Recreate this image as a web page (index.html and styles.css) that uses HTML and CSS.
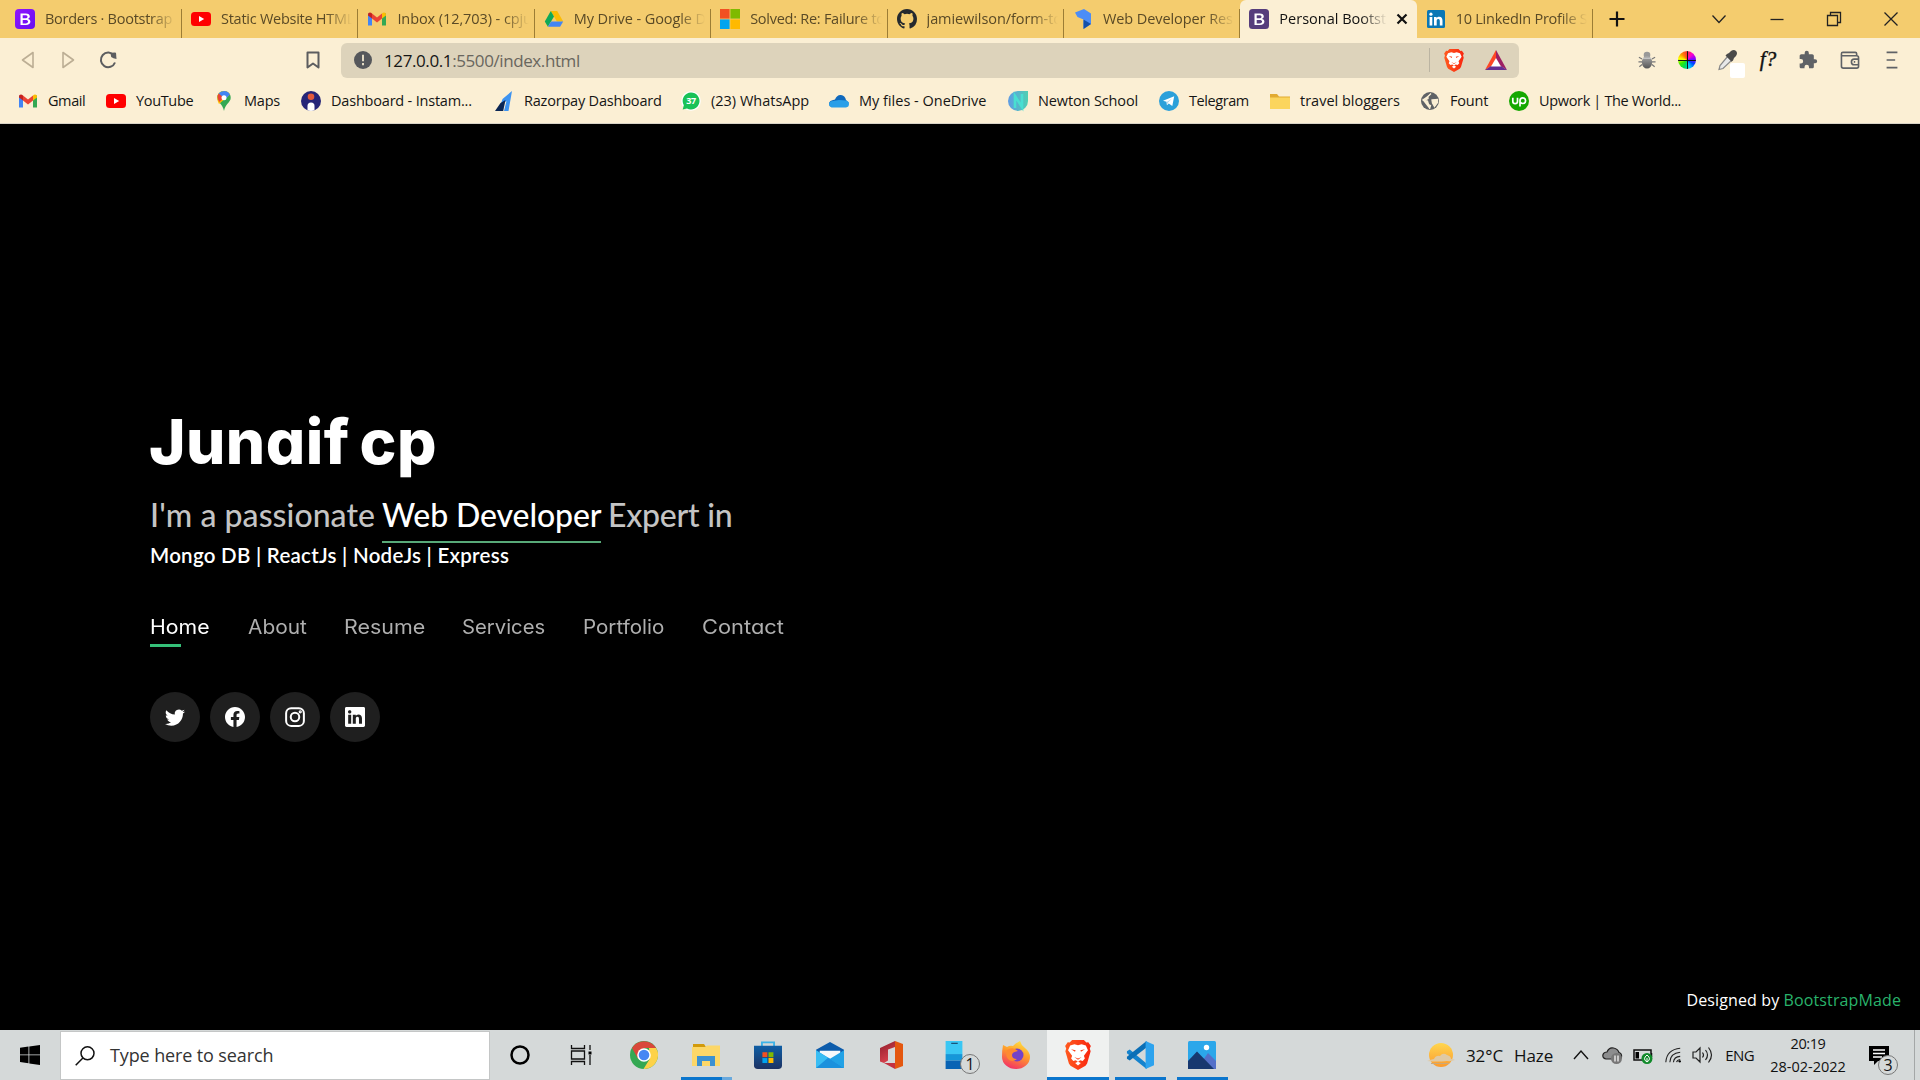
FILE: index.html
```html
<!DOCTYPE html>
<html lang="en">
<head>
<meta charset="utf-8">
<title>Personal Bootstrap Portfolio</title>
<link rel="stylesheet" href="styles.css">
</head>
<body>
<svg class="defs" aria-hidden="true">
  <defs>
    <linearGradient id="purple" x2="1" y2="1"><stop stop-color="#9013fe"/><stop offset="1" stop-color="#6610f2"/></linearGradient>
    <linearGradient id="ff" x1=".7" x2=".3" y2="1"><stop stop-color="#ffe144"/><stop offset=".45" stop-color="#ff9a2b"/><stop offset="1" stop-color="#f22f68"/></linearGradient>
    <linearGradient id="store" x2="0" y2="1"><stop stop-color="#0f5fa6"/><stop offset="1" stop-color="#1c3263"/></linearGradient>
    <linearGradient id="office" x2=".4" y2="1"><stop stop-color="#8f1d2b"/><stop offset="1" stop-color="#d8434e"/></linearGradient>
    <linearGradient id="brv" x2="1"><stop stop-color="#ff5a1f"/><stop offset="1" stop-color="#f9260f"/></linearGradient>
    <linearGradient id="sun" x2="0" y2="1"><stop stop-color="#ffd64f"/><stop offset="1" stop-color="#fb9a2e"/></linearGradient>
    <linearGradient id="nw" x2="1"><stop stop-color="#5f9be4"/><stop offset="1" stop-color="#4fd0b2"/></linearGradient>
    <linearGradient id="bug" x2="0" y2="1"><stop stop-color="#aaa"/><stop offset="1" stop-color="#555"/></linearGradient>
    <symbol id="i-yt" viewBox="0 0 20 20"><rect y="3" width="20" height="14" rx="3.5" fill="#f00"/><path d="M8 7l5.2 3L8 13z" fill="#fff"/></symbol>
    <symbol id="i-gmail" viewBox="0 0 20 20"><path d="M1 4v12.500h4V8z" fill="#4285f4"/><path d="M19 4v12.500h-4V8z" fill="#34a853"/><path d="M5 4.500l5 3.900 5-3.900v5L10 13.400 5 9.500z" fill="#ea4335"/><path d="M1 5.500C1 3.300 3.500 2.700 5 4.500v5L1 6.500z" fill="#c5221f"/><path d="M19 5.500c0-2.200-2.500-2.800-4-1v5l4-3z" fill="#fbbc04"/></symbol>
    <symbol id="i-in" viewBox="0 0 20 20"><rect x="1" y="1" width="18" height="18" rx="1.500" fill="#0a77b5"/><path d="M3.600 8h2.700v8.500H3.600zM8 8h2.600v1.200C11.200 8.300 12 7.800 13.300 7.800c2.500 0 3.200 1.700 3.200 4v4.700h-2.700v-4.200c0-1.200-.3-2.200-1.500-2.200s-1.600.9-1.600 2.100v4.300H8z" fill="#fff"/><circle cx="4.950" cy="5.200" r="1.600" fill="#fff"/></symbol>
    <symbol id="i-brave" viewBox="0 0 24 28"><path d="M6.500 0h11l2.300 2.300 1.800-.3L24 5.500l-1 2.500.8 2.500-3.300 11.500-1.500 2L12 28l-7-4-1.500-2L.2 10.500 1 8 0 5.500 2.400 2l1.800.3z" fill="url(#brv)"/><path d="M12 5l3.300-1 4 1.200 2 4.300-3.800 5.300.9 2.500-2 2.200-2.400-.6L12 20.500l-2-1.600-2.400.6-2-2.200.9-2.500L2.700 9.500l2-4.300L8.700 4z" fill="#fff"/><path d="M9.300 21.500l2.700-1.300 2.700 1.300-2.700 2.300z" fill="#fff"/><path d="M5.500 8.600l4.300.9-.6 1.500zM18.500 8.600l-4.300.9.600 1.500zM8.500 15.800l3.500 1.500 3.500-1.500-3.500 2.600z" fill="#fa4119"/></symbol>
    <symbol id="i-boot" viewBox="0 0 20 20"><path fill="#fff" fill-rule="evenodd" d="M5.500 4.500h5.300c2.600 0 4 1.100 4 3 0 1.200-.8 2.100-1.900 2.400 1.500.2 2.500 1.200 2.500 2.700 0 2.200-1.700 3.400-4.500 3.400H5.500zm2.200 1.700v3.100h2.300c1.600 0 2.500-.5 2.500-1.600 0-1-.7-1.500-2.100-1.500zm0 4.700v3.500h2.900c1.600 0 2.500-.6 2.500-1.800s-.9-1.700-2.700-1.700z"/></symbol>
  </defs>
</svg>

<header class="browser">
  <div class="tabstrip">
    <div class="tab first"><svg class="ico" viewBox="0 0 20 20"><rect width="20" height="20" rx="4" fill="url(#purple)"/><use href="#i-boot"/></svg><span class="title tight">Borders · Bootstrap</span></div>
    <div class="tab"><svg class="ico"><use href="#i-yt"/></svg><span class="title tight">Static Website HTML</span></div>
    <div class="tab"><svg class="ico"><use href="#i-gmail"/></svg><span class="title">Inbox (12,703) - cpju</span></div>
    <div class="tab"><svg class="ico" viewBox="0 0 20 20"><path d="M6.800 2h6.400l6 10.500h-6.300z" fill="#fbbc04"/><path d="M6.800 2L.8 12.500l3.100 5.300L10 7.500z" fill="#0fa958"/><path d="M3.900 17.800l3.200-5.300h12.100l-3.100 5.300z" fill="#4285f4"/></svg><span class="title">My Drive - Google D</span></div>
    <div class="tab"><svg class="ico" viewBox="0 0 20 20"><path d="M0 0h9.600v9.600H0z" fill="#f25022"/><path d="M10.400 0H20v9.600h-9.600z" fill="#7fba00"/><path d="M0 10.400h9.600V20H0z" fill="#00a4ef"/><path d="M10.400 10.400H20V20h-9.600z" fill="#ffb900"/></svg><span class="title tight">Solved: Re: Failure to</span></div>
    <div class="tab"><svg class="ico" viewBox="0 0 16 16"><path fill="#24292e" d="M8 0C3.580 0 0 3.580 0 8c0 3.540 2.290 6.530 5.470 7.590.4.070.55-.17.55-.38v-1.490c-2.010.37-2.530-.49-2.690-.94-.09-.23-.48-.94-.82-1.130-.28-.15-.68-.52-.01-.53.63-.01 1.080.58 1.230.82.72 1.210 1.870.87 2.330.66.070-.52.280-.87.510-1.070-1.780-.2-3.640-.89-3.640-3.950 0-.87.310-1.590.820-2.150-.08-.2-.36-1.020.08-2.120 0 0 .67-.21 2.200.82a7.400 7.400 0 0 1 4 0c1.530-1.040 2.200-.82 2.200-.82.44 1.100.16 1.920.08 2.120.51.56.82 1.270.82 2.150 0 3.070-1.870 3.750-3.650 3.950.29.25.54.73.54 1.480v2.200c0 .21.150.46.550.38A8 8 0 0 0 16 8c0-4.420-3.580-8-8-8z"/></svg><span class="title">jamiewilson/form-to</span></div>
    <div class="tab"><svg class="ico" viewBox="0 0 20 20"><path d="M2 3.500L11 0l7 4.500V15l-7.500 5v-9.500L4.500 8z" fill="#4c8df6"/><path d="M10.500 10.500L18 15l-7.500 5z" fill="#1450a8"/></svg><span class="title">Web Developer Resu</span></div>
    <div class="tab active"><svg class="ico" viewBox="0 0 20 20"><rect width="20" height="20" rx="3.500" fill="#563d7c"/><use href="#i-boot"/></svg><span class="title">Personal Bootstr</span><svg class="close" viewBox="0 0 12 12"><path d="M1.500 1.500l9 9m0-9l-9 9" stroke="#111" stroke-width="2.200"/></svg></div>
    <div class="tab"><svg class="ico"><use href="#i-in"/></svg><span class="title tight">10 LinkedIn Profile S</span></div>
    <svg class="newtab" viewBox="0 0 16 16"><path d="M8 .5v15M.5 8h15" stroke="#111" stroke-width="2.200"/></svg>
    <div class="winctl">
      <svg viewBox="0 0 16 16"><path d="M1.500 4.500L8 11.500l6.500-7" /></svg>
      <svg viewBox="0 0 16 16"><path d="M1.500 8.500h13"/></svg>
      <svg viewBox="0 0 16 16"><path d="M1.500 4.500h10v10h-10zM4.500 4.500v-3h10v10h-3"/></svg>
      <svg viewBox="0 0 16 16"><path d="M1.500 1.500l13 13m0-13l-13 13"/></svg>
    </div>
  </div>

  <div class="toolbar">
    <svg class="nav" viewBox="0 0 20 20"><path d="M15 2.500v15L4.500 10z" fill="none" stroke="#bcae94" stroke-width="1.600" stroke-linejoin="round"/></svg>
    <svg class="nav" viewBox="0 0 20 20"><path d="M5 2.500v15L15.500 10z" fill="none" stroke="#bcae94" stroke-width="1.600" stroke-linejoin="round"/></svg>
    <svg class="nav" viewBox="0 0 20 20"><path d="M17 12.500A7.300 7.300 0 1 1 16 5.500" fill="none" stroke="#5c5d5f" stroke-width="2"/><path d="M12.500 3.500q2.500-1.300 5.500-.8l.5 6.200q-3.500-.3-5.300-2z" fill="#5c5d5f"/></svg>
    <svg class="nav mark" viewBox="0 0 20 20"><path d="M4.500 2.500h11v15L10 13.500l-5.500 4z" fill="none" stroke="#5c5d5f" stroke-width="2" stroke-linejoin="round"/></svg>
    <div class="url">
      <svg class="info" viewBox="0 0 18 18"><circle cx="9" cy="9" r="9" fill="#55575b"/><path d="M9 3.800v6.400m0 1.800v2.200" stroke="#e3dac3" stroke-width="2"/></svg>
      <span class="addr"><b>127.0.0.1</b>:5500/index.html</span>
      <i class="sep"></i>
      <svg class="shield"><use href="#i-brave"/></svg>
      <svg class="bat" viewBox="0 0 22 20"><path d="M11 0L0 20l11-7z" fill="#ff4724"/><path d="M11 0l11 20-11-7z" fill="#9e1f63"/><path d="M0 20h22l-6-4H6z" fill="#662d91"/><path d="M11 8l5 8.500H6z" fill="#fff"/></svg>
    </div>
    <div class="ext">
      <svg viewBox="0 0 20 20"><path d="M4.500 9L1 7m3.500 5H.5m4 3L1.500 17.500M15.500 9L19 7m-3.500 5h4m-4 3l3 2.500" stroke="#777" stroke-width="1.300" fill="none"/><circle cx="10" cy="4.500" r="3.700" fill="#999"/><ellipse cx="10" cy="12.500" rx="5.700" ry="7" fill="url(#bug)"/><path d="M5 8h10" stroke="#ddd"/></svg>
      <div class="wheelbox"><i class="wheel"></i></div>
      <div class="picker"><svg viewBox="0 0 20 20"><path d="M10 6l4 4-9 8.500-4 1 1-4z" fill="#e8e8e8" stroke="#888" stroke-width="1.200"/><path d="M9 4l2-1 2-2q3-2 5 0t0 5l-2 2-1 2.500-1.500 1.200L7.500 5.500z" fill="#4a4a4a"/></svg><i></i></div>
      <div class="fn">f?</div>
      <svg class="puzzle" viewBox="0 0 24 24"><path fill="#5f6266" d="M20.500 11H19V7c0-1.100-.9-2-2-2h-4V3.500a2.500 2.500 0 0 0-5 0V5H4c-1.100 0-2 .9-2 2v3.800h1.500a2.700 2.700 0 0 1 0 5.400H2V20c0 1.100.9 2 2 2h3.800v-1.500a2.700 2.700 0 0 1 5.400 0V22H17c1.100 0 2-.9 2-2v-4h1.500a2.500 2.500 0 0 0 0-5z"/></svg>
      <svg class="wallet" viewBox="0 0 20 20"><path d="M17 5V3q0-1.500-1.500-1.500h-13Q1 1.500 1 3v13q0 2 2 2h14q2 0 2-2V7q0-2-2-2H1M19 8.500h-4.500a3 3 0 0 0 0 6H19M14 11.500h1.500" fill="none" stroke="#5f6266" stroke-width="1.700"/></svg>
      <svg viewBox="0 0 20 20"><path d="M4 1.500h12M4 10h9.500M4 18.500h12" stroke="#5f6266" stroke-width="1.800"/></svg>
    </div>
  </div>

  <nav class="bookmarks">
    <a class="w88 t4"><svg class="ico"><use href="#i-gmail"/></svg>Gmail</a>
    <a class="w108 t3"><svg class="ico"><use href="#i-yt"/></svg>YouTube</a>
    <a class="w87 t2"><svg class="ico" viewBox="0 0 20 20"><path d="M10 0C6 0 3.300 3 3.300 6.700 3.300 11.500 9 13 10 20c1-7 6.700-8.500 6.700-13.300C16.700 3 14 0 10 0z" fill="#34a853"/><path d="M10 0c3 0 5 1.500 6 3.600L5 13Q3.300 10 3.300 6.700 3.300 1 10 0z" fill="#fbbc04"/><path d="M10 0c3 0 5 1.500 6 3.600L10 9.500 4.700 2.600Q6.500 0 10 0z" fill="#4285f4"/><path d="M4.700 2.600l5 4.200L5.500 11Q2 6 4.700 2.600z" fill="#ea4335"/><circle cx="10" cy="6.700" r="2.500" fill="#fff"/></svg>Maps</a>
    <a class="w193 t2"><svg class="ico" viewBox="0 0 20 20"><circle cx="10" cy="10" r="10" fill="#262578"/><circle cx="10" cy="5.800" r="3.300" fill="#e35a3c"/><path d="M6.500 19v-4a3.500 3.500 0 0 1 7 0v4q-3.500 2-7 0z" fill="#fff"/></svg>Dashboard - Instam...</a>
    <a class="w187 t2"><svg class="ico" viewBox="0 0 20 20"><path d="M18 0l-3.500 20H10l2.500-10-6 4 2-6z" fill="#3d93f0"/><path d="M6.500 12l5-3-2.300 11H1z" fill="#0b2654"/></svg>Razorpay Dashboard</a>
    <a class="w148"><svg class="ico" viewBox="0 0 20 20"><circle cx="10" cy="10" r="9.800" fill="#fff"/><path d="M10 1.500a8.500 8.500 0 1 1-4 16l-4.300 1 1.100-4.200A8.500 8.500 0 0 1 10 1.500z" fill="#19c257"/><text x="10" y="13.300" text-anchor="middle" font-size="9" font-weight="700" fill="#fff">37</text></svg>(23) WhatsApp</a>
    <a class="w179"><svg class="ico" viewBox="0 0 20 20"><path d="M6 8.500Q8 3.500 12 4t5 5l3 3-8 4L3 16Q0 15.500 0 12.500T6 8.500z" fill="#0f69bd"/><path d="M2.500 16.500Q0 16 0 13.200T4 10l6-1 7 .5q3 .5 3 3.500t-3 3.500z" fill="#2a9fe8"/></svg>My files - OneDrive</a>
    <a class="w151 t1"><svg class="ico" viewBox="0 0 20 20"><path d="M10 0h10v10a10 10 0 1 1-10-10z" fill="url(#nw)"/><path d="M7 17V5l7 11V3" fill="none" stroke="#49dfd1" stroke-width="2.600"/></svg>Newton School</a>
    <a class="w111 t4"><svg class="ico" viewBox="0 0 20 20"><circle cx="10" cy="10" r="10" fill="#2ba0da"/><path d="M4 9.800L15.200 5.300 13.300 15l-3.500-2.600-1.900 1.900-.4-3.500z" fill="#fff"/><path d="M7.700 11l5.300-3.600-4.100 4.400-.8 2z" fill="#b4d6ea"/></svg>Telegram</a>
    <a class="w150"><svg class="ico" viewBox="0 0 20 20"><path d="M0 3h7l2 2.500h11V17H0z" fill="#e2ab31"/><path d="M0 6.500h20V18H0z" fill="#fbd55d"/></svg>travel bloggers</a>
    <a class="w89 t2"><svg class="ico" viewBox="0 0 20 20"><circle cx="10" cy="10" r="9" fill="#5f6266"/><path d="M11 2.500l-3 3v2L5 9l-2.500-.5M2.500 9l5 1 1 3.500 2 1-1 3.500M12 9l5.500-.5v3l-3 4-2-3.500z" fill="#faefd5" stroke="#faefd5" stroke-width="1.300"/></svg>Fount</a>
    <a class="t3"><svg class="ico" viewBox="0 0 20 20"><circle cx="10" cy="10" r="10" fill="#15a800"/><path d="M3.800 6.800v3.400a2.200 2.200 0 0 0 4.700 0V6.800M11 15.500V9.700a2.800 2.800 0 1 1 2.800 2.800q-1.600 0-2.800-1.300" fill="none" stroke="#fff" stroke-width="1.700"/></svg>Upwork | The World...</a>
  </nav>
</header>

<main class="page">
  <section class="hero">
    <h1>Junaif cp</h1>
    <h2><span class="lead">I'm a passionate</span> <span class="role">Web Developer</span> <span class="tail">Expert in</span></h2>
    <p class="skills">Mongo DB | ReactJs | NodeJs | Express</p>
    <nav class="menu">
      <a class="on"><span class="m1">Home</span></a><a><span class="m2">About</span></a><a><span class="m3">Resume</span></a><a><span class="m4">Services</span></a><a><span class="m5">Portfolio</span></a><a><span class="m6">Contact</span></a>
    </nav>
    <div class="social">
      <a><svg viewBox="0 0 16 16"><path d="M5.026 15c6.038 0 9.341-5.003 9.341-9.334 0-.14 0-.282-.006-.422A6.685 6.685 0 0 0 16 3.542a6.658 6.658 0 0 1-1.889.518 3.301 3.301 0 0 0 1.447-1.817 6.533 6.533 0 0 1-2.087.793A3.286 3.286 0 0 0 7.875 6.030a9.325 9.325 0 0 1-6.767-3.429 3.289 3.289 0 0 0 1.018 4.382A3.323 3.323 0 0 1 .64 6.575v.045a3.288 3.288 0 0 0 2.632 3.218 3.203 3.203 0 0 1-.865.115 3.230 3.230 0 0 1-.614-.057 3.283 3.283 0 0 0 3.067 2.277A6.588 6.588 0 0 1 .780 13.580a6.320 6.320 0 0 1-.780-.045A9.344 9.344 0 0 0 5.026 15z"/></svg></a>
      <a><svg viewBox="0 0 16 16"><path d="M16 8.049c0-4.446-3.582-8.050-8-8.050C3.580 0-.002 3.603-.002 8.050c0 4.017 2.926 7.347 6.750 7.951v-5.625h-2.030V8.050H6.750V6.275c0-2.017 1.195-3.131 3.022-3.131.876 0 1.791.157 1.791.157v1.980h-1.009c-.993 0-1.303.621-1.303 1.258v1.510h2.218l-.354 2.326H9.250V16c3.824-.604 6.750-3.934 6.750-7.951z"/></svg></a>
      <a><svg viewBox="0 0 16 16" class="line"><rect x=".9" y=".9" width="14.200" height="14.200" rx="4"/><circle cx="8" cy="8" r="3.400"/><circle cx="12.200" cy="3.800" r=".5"/></svg></a>
      <a><svg viewBox="0 0 16 16"><path d="M0 1.146C0 .513.526 0 1.175 0h13.650C15.474 0 16 .513 16 1.146v13.708c0 .633-.526 1.146-1.175 1.146H1.175C.526 16 0 15.487 0 14.854zm4.943 12.248V6.169H2.542v7.225zm-1.200-8.212c.837 0 1.358-.554 1.358-1.248-.015-.709-.520-1.248-1.342-1.248S2.400 3.226 2.400 3.934c0 .694.521 1.248 1.327 1.248zm4.908 8.212V9.359c0-.216.016-.432.080-.586.173-.431.568-.878 1.232-.878.869 0 1.216.662 1.216 1.634v3.865h2.401V9.250c0-2.220-1.184-3.252-2.764-3.252-1.274 0-1.845.7-2.165 1.193v-1.022h-2.400c.03.678 0 7.225 0 7.225z"/></svg></a>
    </div>
  </section>
  <footer class="credits">Designed by <a>BootstrapMade</a></footer>
</main>

<footer class="taskbar">
  <div class="start"><svg viewBox="0 0 20 20"><path d="M0 2.800l8.500-1.200v7.900H0zM9.300 1.500L20 0v9.500H9.300zM0 10.300h8.500v7.900L0 17zM9.300 10.300H20V20L9.300 18.400z"/></svg></div>
  <div class="search"><svg viewBox="0 0 20 20"><circle cx="12.500" cy="7.300" r="6.500"/><path d="M7.900 11.900L.7 19.300"/></svg><span>Type here to search</span></div>
  <div class="apps">
    <div class="app sm"><svg viewBox="0 0 20 20"><circle cx="10" cy="10" r="8.500" fill="none" stroke="#000" stroke-width="2.500"/></svg></div>
    <div class="app md"><svg viewBox="0 0 22 20"><path d="M1.500 0v3.500h13V0M1.500 20v-3.500h13V20M1.500 6h13v8h-13zM20 0v5m0 5v10" fill="none" stroke="#111" stroke-width="1.300"/><path d="M18.500 6.500h3v3h-3z"/></svg></div>
    <div class="app"><svg viewBox="0 0 28 28"><circle cx="14" cy="14" r="14" fill="#34a853"/><path d="M2 7A14 14 0 0 1 26.100 7H14L7.900 17.500z" fill="#d9473a"/><path d="M26.100 7A14 14 0 0 1 13.500 28L20 17.500 19 7z" fill="#fdd249"/><circle cx="14" cy="14" r="6.800" fill="#fff"/><circle cx="14" cy="14" r="5.300" fill="#4587f3"/></svg></div>
    <div class="app open more"><svg viewBox="0 0 28 28"><path d="M1 3h11l2 3H1z" fill="#d29a0b"/><path d="M0 6h13l2-1.500h13V25H0z" fill="#fcd768"/><path d="M5 25V15h18v10h-5v-5h-8v5z" fill="#3c91d1"/></svg></div>
    <div class="app"><svg viewBox="0 0 30 30"><path d="M8.500 6V1.500h13V6" fill="none" stroke="#3db4e8" stroke-width="2"/><path d="M0 5h30v21q0 4-4 4H4q-4 0-4-4z" fill="url(#store)"/><path d="M9 12h5.300v5.300H9z" fill="#f25022"/><path d="M15.500 12h5.300v5.300h-5.300z" fill="#7fba00"/><path d="M9 18.300h5.300v5.300H9z" fill="#00a4ef"/><path d="M15.500 18.300h5.300v5.300h-5.300z" fill="#ffb900"/></svg></div>
    <div class="app"><svg viewBox="0 0 30 28"><path d="M0 8.500L15 0l15 8.500V15H0z" fill="#0d5cab"/><path d="M4 9.500h22v6L15 20 4 14z" fill="#f7f9fb"/><path d="M0 9l15 9 15-9v19H0z" fill="#22a2e6"/><path d="M0 9l30 19H0z" fill="#39bdf3"/><path d="M0 28h30L13 17z" fill="#1b91dd"/></svg></div>
    <div class="app"><svg viewBox="0 0 28 28"><path d="M17 0l8 3v22l-8 3z" fill="#e4570f"/><path d="M17 0v6l-7 2.500v11L6 22l-4-1.500V7z" fill="url(#office)"/><path d="M6 22h11v6z" fill="#c43141"/></svg></div>
    <div class="app"><svg viewBox="0 0 30 30"><path d="M6 0h18v14H6z" fill="#3ac7f4"/><path d="M6 14h18v7H6z" fill="#1597d9"/><path d="M6 21h18v9H6z" fill="#0863b4"/><path d="M12 2.500h7" stroke="#17466b" stroke-width="1.200"/></svg><i class="badge one">1</i></div>
    <div class="app"><svg viewBox="0 0 28 28"><path d="M1 4q2 1 4 2 3-2 6-1 3-3 7-5 1 4 5 7 5 4 5 9a14 12 0 0 1-28 0Q0 9 1 4z" fill="url(#ff)"/><circle cx="15" cy="14" r="6.500" fill="#7542c8"/><path d="M5 9q6-4 11 1-6 1-6 4 0 4 5 4-5 4-9 0-3-4-1-9z" fill="#ff8a30"/></svg></div>
    <div class="app open front"><svg class="lion"><use href="#i-brave"/></svg></div>
    <div class="app open"><svg viewBox="0 0 30 30"><path d="M1 11l3-2 18 15v6L1 13z" fill="#1583cd" /><path d="M1 19l3 2L22 7V0L1 17z" fill="#0b6fb6"/><path d="M21 0l9 4v22l-9 4z" fill="#2da3ee"/></svg></div>
    <div class="app open"><svg viewBox="0 0 28 28"><rect width="28" height="28" rx="1.500" fill="#2ba7ea"/><path d="M13 22L20 12l8 8v8H13z" fill="#5470c9"/><path d="M0 20L9 10.500 26 28H0z" fill="#17386f"/><circle cx="18.500" cy="6.500" r="2.700" fill="#fff"/></svg></div>
  </div>
  <div class="tray">
    <svg class="weather" viewBox="0 0 28 24"><circle cx="14" cy="12" r="12" fill="url(#sun)"/><path d="M0 18q4-1.500 7-2 2-4 6-3 3-4 7-1 4 1 4 4 3 0 4 1-3 1.500-8 1-10 1-20 0z" fill="#dfc9a4"/><path d="M4 20.500h18" stroke="#c9a87b"/></svg>
    <span class="temp">32°C</span><span class="haze">Haze</span>
    <svg class="chev" viewBox="0 0 16 16"><path d="M1 12l7-8 7 8" fill="none" stroke="#111" stroke-width="1.400"/></svg>
    <svg class="cloud" viewBox="0 0 20 20"><path d="M4 14Q0 13 1 9.500 2 7 5 7q2-5 6.500-4T17 7.500q3 1 2.500 4.500T14 14z" fill="#8c8d8e" stroke="#222" stroke-width="1.200"/><circle cx="14.500" cy="13.500" r="5.500" fill="#777"/><path d="M13 10.500v6m3-6v6" stroke="#fff" stroke-width="1.200"/></svg>
    <svg class="batt" viewBox="0 0 20 20"><path d="M1 5h17v10H1zM18.500 8v4" fill="none" stroke="#111" stroke-width="1.500"/><path d="M2.500 7H6v6.500H2.500z"/><circle cx="14" cy="13.500" r="5.500" fill="#108a2a"/><path d="M14 10q5 4 0 7-5-3 0-7zm0 3v4" stroke="#fff" fill="none"/></svg>
    <svg class="wifi" viewBox="0 0 20 20"><path d="M2 18Q3 4 18 2.500M6.500 18Q7 8 18 7M10.500 18q.5-6 7.500-6.500M14 18q.5-2.500 4-3" fill="none" stroke="#222" stroke-width="1.200"/><circle cx="17.500" cy="17" r="1.300"/></svg>
    <svg class="vol" viewBox="0 0 20 20"><path d="M1 7v6h3l4 4V3L4 7zM10.500 7.500q2 2.500 0 5M13.500 5q4 5 0 10M16.500 2.500q6 7.500 0 15" fill="none" stroke="#222" stroke-width="1.200"/></svg>
    <span class="lang">ENG</span>
    <div class="clock"><span class="time">20:19</span><span class="date">28-02-2022</span></div>
    <div class="notif"><svg viewBox="0 0 20 20"><path d="M0 1h20v15H9l-4 4v-4H0z"/><path d="M4 5h12M4 8.500h12M4 12h9" stroke="#fff" stroke-width="1.300"/></svg><i class="badge three">3</i></div>
    <i class="peek"></i>
  </div>
</footer>
</body>
</html>
```

FILE: styles.css
```css
* { box-sizing: border-box; }
body { margin: 0; width: 1920px; height: 1080px; overflow: hidden; display: flex; flex-direction: column; background: #000; font-family: "Open Sans", "Noto Sans", sans-serif; }
svg { display: block; flex: none; overflow: visible; }
.defs { position: absolute; width: 0; height: 0; }
.ico { width: 20px; height: 20px; margin-right: 10px; }

/* browser chrome */
.browser { height: 124px; background: #fbefd4; border-bottom: 1px solid #d8d3c6; }
.tabstrip { height: 38px; display: flex; background: #f4cc6e; font-size: 14.5px; line-height: 38px; color: #5a4a26; }
.tab { width: 176.400px; display: flex; align-items: center; padding: 0 6px 0 9px; position: relative; }
.tab::after { content: ""; position: absolute; right: 0; top: 9px; bottom: 0; width: 1px; background: #9c7d35; }
.tab.first { width: 182px; padding-left: 15px; }
.title { flex: 1; overflow: hidden; white-space: nowrap; letter-spacing: -.08px; -webkit-mask-image: linear-gradient(90deg, #000 calc(100% - 26px), transparent); mask-image: linear-gradient(90deg, #000 calc(100% - 26px), transparent); }
.tight { letter-spacing: -.26px; }
.tab.active { background: #fbefd4; border-radius: 6px 6px 0 0; color: #111; }
.tab.active::after { display: none; }
.tab.active .title { letter-spacing: 0; }
.close { width: 12px; height: 12px; margin: 0 3px 0 9px; }
.newtab { width: 16px; height: 16px; margin: 11px 0 0 16px; }
.winctl { margin-left: auto; display: flex; align-items: center; }
.winctl svg { width: 16px; height: 16px; margin: 0 20.700px; fill: none; stroke: #222; stroke-width: 1.300; }

.toolbar { height: 44px; display: flex; align-items: center; padding-left: 18px; }
.nav { width: 20px; height: 20px; margin-right: 20px; }
.mark { margin: 0 18px 0 165px; }
.url { width: 1178px; height: 35px; border-radius: 6px; background: #ddd3bb; display: flex; align-items: center; padding-left: 13px; }
.info { width: 18px; height: 18px; margin-right: 12px; }
.addr { font-size: 17px; letter-spacing: -.4px; color: #69665e; }
.addr b { font-weight: 400; color: #161616; }
.sep { width: 1px; height: 24px; background: #bbb4a2; margin-left: auto; }
.shield { width: 20px; height: 23px; margin: 0 0 0 14px; }
.bat { width: 22px; height: 20px; margin: 0 12px 0 21px; }
.ext { margin-left: auto; margin-right: 9px; display: grid; grid-template-columns: 40px 40px 41px 40px 39px 46px 38px; place-items: center; }
.ext svg { width: 18px; height: 18px; }
.ext .wallet { width: 20px; height: 19px; }
.ext .puzzle { width: 20px; height: 20px; }
.wheel { display: block; width: 18px; height: 18px; border-radius: 50%; background: linear-gradient(#111, #111) center/100% 1px no-repeat, linear-gradient(#111, #111) center/1px 100% no-repeat, conic-gradient(#f33, #f0c, #80f, #04f, #0cf, #0d5, #3e0, #ff0, #f80, #f33); }
.picker { position: relative; }
.picker svg { width: 20px; height: 20px; }
.picker i { position: absolute; left: 12px; top: 13px; width: 15px; height: 15px; border-radius: 2px; background: #fff; }
.fn { font: italic 500 21px/30px "Liberation Serif", serif; -webkit-text-stroke: .4px #111; margin-top: -2px; color: #111; }

.bookmarks { height: 37px; display: flex; align-items: center; padding-left: 18px; font-size: 14.500px; color: #151515; }
.bookmarks a { display: flex; align-items: center; white-space: nowrap; flex: none; }
.bookmarks text { letter-spacing: -.3px; }
.w88 { width: 88px; } .w108 { width: 108px; } .w87 { width: 87px; } .w193 { width: 193px; } .w187 { width: 187px; }
.w148 { width: 148px; } .w179 { width: 179px; } .w151 { width: 151px; } .w111 { width: 111px; } .w150 { width: 150px; } .w89 { width: 89px; }
.t1 { letter-spacing: -.13px; } .t2 { letter-spacing: -.2px; } .t3 { letter-spacing: -.34px; } .t4 { letter-spacing: -.42px; }

/* portfolio page */
.page { height: 906px; background: #000; display: flex; flex-direction: column; justify-content: space-between; padding: 282px 19px 19px 150px; color: #fff; }
h1, h2, p { margin: 0; white-space: nowrap; }
h1 { font: 800 62px/72px Inter, sans-serif; font-feature-settings: "cv11"; letter-spacing: .45px; word-spacing: -4px; margin-left: -1px; }
h2 { margin-top: 11px; height: 50px; font: 500 32px/51px Lato, sans-serif; color: #c4c4c4; display: flex; }
.lead { width: 232px; letter-spacing: .05px; }
.role { width: 219px; height: 54px; letter-spacing: -.1px; color: #fff; border-bottom: 2px solid #58a978; }
.tail { margin-left: 7px; letter-spacing: -.25px; }
.skills { margin-top: 4px; font: 600 20.500px/25px Lato, sans-serif; height: 24px; letter-spacing: .260px; }
/* the menu face is drawn a little wider than its default */
.menu { margin-top: 48px; height: 32px; display: grid; grid-template-columns: 97.500px 96.500px 118px 121px 118.500px 90px; font: 400 19.500px/25px Inter, sans-serif; font-feature-settings: "cv11"; color: #afafaf; }
.menu span { display: inline-block; transform-origin: left; }
.m1 { transform: scaleX(1.09); } .m2 { transform: scaleX(1.070); } .m3 { transform: scaleX(1.100); } .m4 { transform: scaleX(1.040); } .m5 { transform: scaleX(1.055); } .m6 { transform: scaleX(1.120); }
.on { color: #fff; }
.on::after { content: ""; display: block; width: 31px; height: 3px; margin-top: 4px; background: #35c078; }
.social { margin-top: 45px; display: flex; gap: 10px; }
.social a { width: 50px; height: 50px; border-radius: 50%; background: #1f1f1f; display: grid; place-items: center; }
.social svg { width: 20px; height: 20px; fill: #fff; }
.social .line { fill: none; stroke: #fff; stroke-width: 1.600; }
.credits { text-align: right; font-size: 16px; line-height: 22px; font-weight: 500; letter-spacing: .120px; }
.credits a { color: #29b36b; }

/* desktop taskbar */
.taskbar { height: 50px; background: #d5d9d9; display: flex; color: #111; }
.start { width: 60px; display: grid; place-items: center; }
.start svg { width: 20px; height: 20px; }
.search { width: 430px; height: 49px; margin-top: 1px; background: #fff; border: 1px solid #c4c6c6; display: flex; align-items: center; padding-left: 14px; font-size: 18px; letter-spacing: -.120px; color: #333; }
.search span { margin-top: -2px; }
.search svg { width: 20px; height: 20px; margin-right: 15px; fill: none; stroke: #111; stroke-width: 1.500; }
.apps { display: flex; }
.app { width: 62px; display: flex; align-items: center; justify-content: center; position: relative; }
.app svg { width: 28px; height: 28px; }
.app.sm { width: 60px; }
.app.sm svg { width: 20px; height: 20px; }
.app.md { width: 63px; }
.app.md svg { width: 22px; height: 20px; margin-right: 2px; }
.app .lion { width: 26px; height: 30px; }
.app.open::after { content: ""; position: absolute; left: 6px; right: 5px; bottom: 0; height: 3px; background: #0b76cd; }
.app.more::after { background: linear-gradient(90deg, #0b76cd 80%, #69a9dd 80%); }
.app.front { background: #eff1f0; }
.app.front::after { left: 0; right: 0; }
.badge { position: absolute; display: grid; place-items: center; width: 20px; height: 20px; border: 1px solid #777; border-radius: 50%; background: #d5d9d9; font: 500 16px/1 "Open Sans", sans-serif; }
.one { left: 37px; top: 24px; }
.tray { flex: 1; display: flex; align-items: center; padding-left: 194px; }
.tray .weather { width: 28px; height: 24px; }
.temp, .haze { font-size: 17px; letter-spacing: -.100px; margin-left: 11px; }
.tray .chev { width: 16px; height: 16px; margin-left: 20px; }
.cloud { width: 20px; height: 20px; margin-left: 13px; }
.batt { width: 20px; height: 20px; margin-left: 11px; }
.wifi { width: 18px; height: 20px; margin-left: 11px; }
.vol { width: 20px; height: 20px; margin-left: 10px; }
.lang { font-size: 15px; letter-spacing: -.500px; margin-left: 13px; }
.clock { width: 76px; margin-left: auto; display: flex; flex-direction: column; text-align: center; font-size: 14.500px; line-height: 23px; white-space: nowrap; }
.time { letter-spacing: -.400px; }
.notif { position: relative; margin: 0 25px 0 23px; }
.notif svg { width: 20px; height: 20px; }
.three { left: 9px; top: 10px; }
.peek { width: 6px; height: 50px; border-left: 1px solid #a4a7a7; }
```
